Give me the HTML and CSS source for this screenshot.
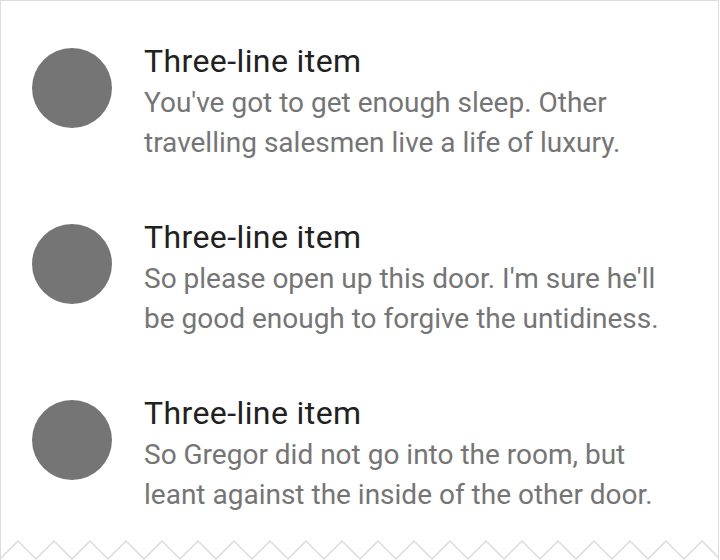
FILE: index.html
```html
<!DOCTYPE html>
<html lang="en">
<head>
<meta charset="utf-8">
<title>Three-line list</title>
<link rel="stylesheet" href="styles.css">
</head>
<body>
<div class="frame">
  <ul class="list">
    <li class="item">
      <span class="avatar"></span>
      <div class="text">
        <div class="title">Three-line item</div>
        <div class="secondary">You've got to get enough sleep. Other travelling salesmen live a life of luxury.</div>
      </div>
    </li>
    <li class="item">
      <span class="avatar"></span>
      <div class="text">
        <div class="title">Three-line item</div>
        <div class="secondary">So please open up this door. I'm sure he'll be good enough to forgive the untidiness.</div>
      </div>
    </li>
    <li class="item">
      <span class="avatar"></span>
      <div class="text">
        <div class="title">Three-line item</div>
        <div class="secondary">So Gregor did not go into the room, but leant against the inside of the other door.</div>
      </div>
    </li>
  </ul>
  <svg class="zigzag" viewBox="0 0 717 20" width="717" height="20" aria-hidden="true">
    <polyline fill="none" stroke="#dadada" stroke-width="1.4" points="-1,19 17,1 35,19 53,1 71,19 89,1 107,19 125,1 143,19 161,1 179,19 197,1 215,19 233,1 251,19 269,1 287,19 305,1 323,19 341,1 359,19 377,1 395,19 413,1 431,19 449,1 467,19 485,1 503,19 521,1 539,19 557,1 575,19 593,1 611,19 629,1 647,19 665,1 683,19 701,1 719,19"/>
  </svg>
</div>
</body>
</html>
```
FILE: styles.css
```css
html, body {
  margin: 0;
  padding: 0;
  background: #ffffff;
}
body {
  font-family: Roboto, "Noto Sans", "Liberation Sans", sans-serif;
}
.frame {
  box-sizing: border-box;
  width: 719px;
  height: 560px;
  border: 1px solid #dcdcdc;
  border-bottom: none;
  display: flex;
  flex-direction: column;
}
.list {
  list-style: none;
  margin: -1px 0 0 -1px;
  padding: 0;
}
.item {
  box-sizing: border-box;
  height: 176px;
  display: flex;
  align-items: flex-start;
  gap: 32px;
  padding: 0 32px;
}
.avatar {
  flex: none;
  width: 80px;
  height: 80px;
  margin-top: 48px;
  border-radius: 50%;
  background: #757575;
}
.text {
  padding-top: 39px;
  min-width: 0;
}
.title {
  font-size: 32px;
  line-height: 44px;
  letter-spacing: 0.4px;
  color: #212121;
}
.secondary {
  font-size: 28px;
  line-height: 40px;
  color: #757575;
}
.zigzag {
  display: block;
  margin-top: auto;
}
```
